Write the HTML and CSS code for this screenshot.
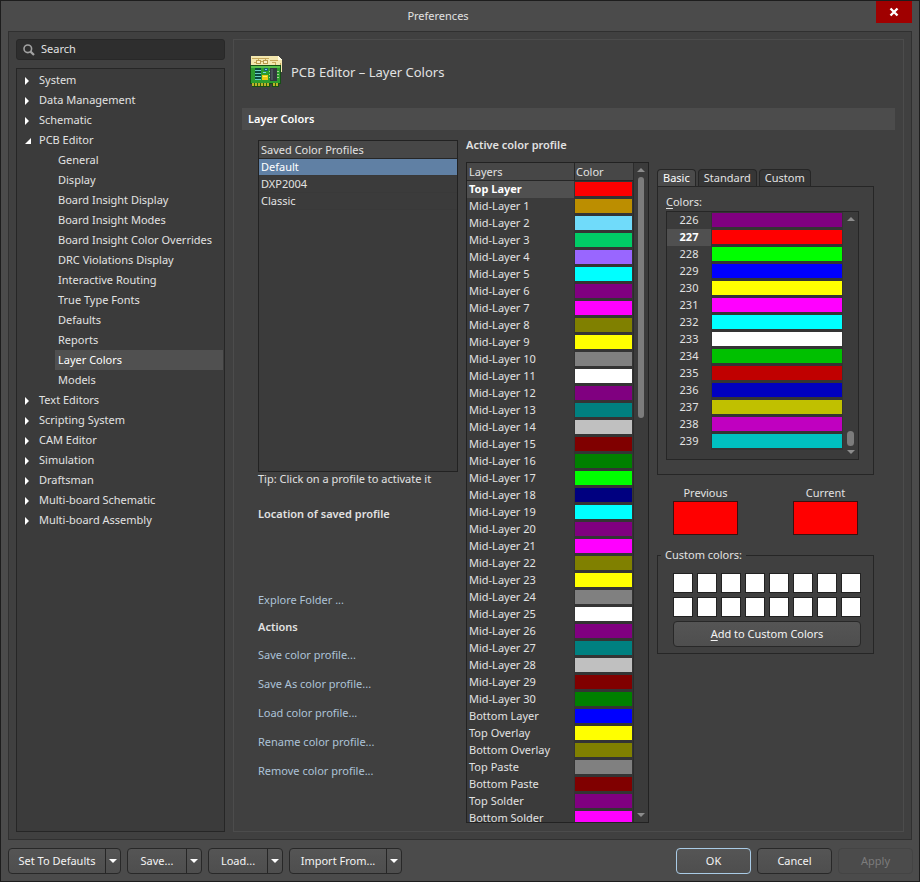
FILE: index.html
```html
<!DOCTYPE html>
<html lang="en">
<head>
<meta charset="utf-8">
<title>Preferences</title>
<link rel="stylesheet" href="styles.css">
</head>
<body>
<div class="window">
  <header class="titlebar">
    <h1>Preferences</h1>
    <button class="close" aria-label="Close"><svg width="10" height="10" viewBox="0 0 10 10"><path d="M1.5 1.5L8.5 8.5M8.5 1.5L1.5 8.5" stroke="#fff" stroke-width="2.4"/></svg></button>
  </header>

  <main class="body">
    <aside class="side">
      <label class="search">
        <svg width="12" height="12" viewBox="0 0 12 12" fill="none" stroke="#a2a2a2"><circle cx="4.8" cy="4.8" r="3.8" stroke-width="1.6"/><path d="M7.6 7.6L11 11" stroke-width="2.2"/></svg>
        <input type="text" placeholder="Search" aria-label="Search">
      </label>
      <nav class="tree">
        <ul>
          <li><a href="#" class="node">System</a></li>
          <li><a href="#" class="node">Data Management</a></li>
          <li><a href="#" class="node">Schematic</a></li>
          <li><a href="#" class="node open">PCB Editor</a>
            <ul class="sub">
              <li><a href="#">General</a></li>
              <li><a href="#">Display</a></li>
              <li><a href="#">Board Insight Display</a></li>
              <li><a href="#">Board Insight Modes</a></li>
              <li><a href="#">Board Insight Color Overrides</a></li>
              <li><a href="#">DRC Violations Display</a></li>
              <li><a href="#">Interactive Routing</a></li>
              <li><a href="#">True Type Fonts</a></li>
              <li><a href="#">Defaults</a></li>
              <li><a href="#">Reports</a></li>
              <li><a href="#" class="current">Layer Colors</a></li>
              <li><a href="#">Models</a></li>
            </ul>
          </li>
          <li><a href="#" class="node">Text Editors</a></li>
          <li><a href="#" class="node">Scripting System</a></li>
          <li><a href="#" class="node">CAM Editor</a></li>
          <li><a href="#" class="node">Simulation</a></li>
          <li><a href="#" class="node">Draftsman</a></li>
          <li><a href="#" class="node">Multi-board Schematic</a></li>
          <li><a href="#" class="node">Multi-board Assembly</a></li>
        </ul>
      </nav>
    </aside>

    <section class="page">
      <div class="heading">
        <svg width="33" height="33" viewBox="0 0 33 33" shape-rendering="crispEdges">
          <path d="M1 1H28L32 5V17H1Z" fill="#f3e7ae"/>
          <path d="M28 1V5H32Z" fill="#fffbe0"/>
          <path d="M2 3.5H19M20 5.5H28M11 6.5H13M22 7.5H25V10M8.5 3V5M15.5 3V5M4 7.5H6M30.5 8V16" stroke="#c7a95c" fill="none"/>
          <path d="M6.5 5.5H10.5V8.5H6.5ZM13.5 5.5H17.5V8.5H13.5Z" stroke="#b99a4e" fill="#f9f0c4"/>
          <path d="M0 10H31V29H29V32H22V29H20V32H2V29H0Z" fill="#164f16"/>
          <path d="M1 11H30V28H1Z" fill="#2c9c2e"/>
          <path d="M1 11H30V13H1Z" fill="#58bf4b"/>
          <path d="M2 28H19V31H2ZM23 28H28V31H23Z" fill="#b9b527"/>
          <path d="M4.5 28V31M7.5 28V31M10.5 28V31M13.5 28V31M16.5 28V31M25.5 28V31" stroke="#315c13"/>
          <path d="M5 14H11M5 17H11M5 20H11M5 23H11" stroke="#0b4a3e" stroke-width="2"/>
          <path d="M5 15.5H11M5 18.5H11M5 21.5H11M5 24.5H11" stroke="#69cfc0"/>
          <path d="M14 13H18V16H14Z" fill="#175e73"/>
          <path d="M15 14H17V15H15ZM13 17H16V18H13Z" fill="#72d8e3"/>
          <path d="M12 20H18V25H12Z" fill="#e9cc13"/>
          <path d="M13 21H17V22H13Z" fill="#fff05b"/>
          <path d="M20 13H27V26H20Z" fill="#343a40"/>
          <path d="M21 14H23V25H21Z" fill="#4b5359"/>
          <path d="M19 16.5H20M19 19.5H20M19 22.5H20M27 16.5H29M27 19.5H29M27 22.5H29" stroke="#a7d293"/>
        </svg>
        <h2>PCB Editor – Layer Colors</h2>
      </div>
      <h3 class="bar">Layer Colors</h3>

      <div class="columns">
        <div class="profiles">
          <div class="profile-list">
            <div class="list-head">Saved Color Profiles</div>
            <button class="profile selected">Default</button>
            <button class="profile">DXP2004</button>
            <button class="profile">Classic</button>
          </div>
          <p class="tip">Tip: Click on a profile to activate it</p>
          <h4 class="location">Location of saved profile</h4>
          <a href="#" class="explore">Explore Folder ...</a>
          <h4 class="actions-title">Actions</h4>
          <div class="actions">
            <a href="#">Save color profile...</a>
            <a href="#">Save As color profile...</a>
            <a href="#">Load color profile...</a>
            <a href="#">Rename color profile...</a>
            <a href="#">Remove color profile...</a>
          </div>
        </div>

        <div class="active">
          <h4>Active color profile</h4>
          <div class="layer-list">
            <div class="clip">
              <table class="layers">
                <thead><tr><th>Layers</th><th class="color-col">Color</th></tr></thead>
                <tbody>
                  <tr class="selected"><td>Top Layer</td><td class="sw red"></td></tr>
                  <tr><td>Mid-Layer 1</td><td class="sw ochre"></td></tr>
                  <tr><td>Mid-Layer 2</td><td class="sw sky"></td></tr>
                  <tr><td>Mid-Layer 3</td><td class="sw emerald"></td></tr>
                  <tr><td>Mid-Layer 4</td><td class="sw violet"></td></tr>
                  <tr><td>Mid-Layer 5</td><td class="sw cyan"></td></tr>
                  <tr><td>Mid-Layer 6</td><td class="sw purple"></td></tr>
                  <tr><td>Mid-Layer 7</td><td class="sw magenta"></td></tr>
                  <tr><td>Mid-Layer 8</td><td class="sw olive"></td></tr>
                  <tr><td>Mid-Layer 9</td><td class="sw yellow"></td></tr>
                  <tr><td>Mid-Layer 10</td><td class="sw gray"></td></tr>
                  <tr><td>Mid-Layer 11</td><td class="sw white"></td></tr>
                  <tr><td>Mid-Layer 12</td><td class="sw purple"></td></tr>
                  <tr><td>Mid-Layer 13</td><td class="sw teal"></td></tr>
                  <tr><td>Mid-Layer 14</td><td class="sw silver"></td></tr>
                  <tr><td>Mid-Layer 15</td><td class="sw maroon"></td></tr>
                  <tr><td>Mid-Layer 16</td><td class="sw green"></td></tr>
                  <tr><td>Mid-Layer 17</td><td class="sw lime"></td></tr>
                  <tr><td>Mid-Layer 18</td><td class="sw navy"></td></tr>
                  <tr><td>Mid-Layer 19</td><td class="sw cyan"></td></tr>
                  <tr><td>Mid-Layer 20</td><td class="sw purple"></td></tr>
                  <tr><td>Mid-Layer 21</td><td class="sw magenta"></td></tr>
                  <tr><td>Mid-Layer 22</td><td class="sw olive"></td></tr>
                  <tr><td>Mid-Layer 23</td><td class="sw yellow"></td></tr>
                  <tr><td>Mid-Layer 24</td><td class="sw gray"></td></tr>
                  <tr><td>Mid-Layer 25</td><td class="sw white"></td></tr>
                  <tr><td>Mid-Layer 26</td><td class="sw purple"></td></tr>
                  <tr><td>Mid-Layer 27</td><td class="sw teal"></td></tr>
                  <tr><td>Mid-Layer 28</td><td class="sw silver"></td></tr>
                  <tr><td>Mid-Layer 29</td><td class="sw maroon"></td></tr>
                  <tr><td>Mid-Layer 30</td><td class="sw green"></td></tr>
                  <tr><td>Bottom Layer</td><td class="sw blue"></td></tr>
                  <tr><td>Top Overlay</td><td class="sw yellow"></td></tr>
                  <tr><td>Bottom Overlay</td><td class="sw olive"></td></tr>
                  <tr><td>Top Paste</td><td class="sw gray"></td></tr>
                  <tr><td>Bottom Paste</td><td class="sw maroon"></td></tr>
                  <tr><td>Top Solder</td><td class="sw purple"></td></tr>
                  <tr><td>Bottom Solder</td><td class="sw magenta"></td></tr>
                </tbody>
              </table>
            </div>
            <div class="scroll layer-scroll"><i class="up"></i><i class="thumb"></i><i class="down"></i></div>
          </div>
        </div>

        <div class="picker">
          <div class="tabs" role="tablist">
            <button role="tab" aria-selected="true" class="on">Basic</button>
            <button role="tab">Standard</button>
            <button role="tab">Custom</button>
          </div>
          <div class="tabpanel" role="tabpanel">
            <p id="colors-label"><u>C</u>olors:</p>
            <div class="color-list">
              <table class="basic" aria-labelledby="colors-label">
                <tbody>
                  <tr><td>226</td><td class="sw purple"></td></tr>
                  <tr class="selected"><td>227</td><td class="sw red"></td></tr>
                  <tr><td>228</td><td class="sw lime"></td></tr>
                  <tr><td>229</td><td class="sw blue"></td></tr>
                  <tr><td>230</td><td class="sw yellow"></td></tr>
                  <tr><td>231</td><td class="sw magenta"></td></tr>
                  <tr><td>232</td><td class="sw cyan"></td></tr>
                  <tr><td>233</td><td class="sw white"></td></tr>
                  <tr><td>234</td><td class="sw green2"></td></tr>
                  <tr><td>235</td><td class="sw red2"></td></tr>
                  <tr><td>236</td><td class="sw blue2"></td></tr>
                  <tr><td>237</td><td class="sw yellow2"></td></tr>
                  <tr><td>238</td><td class="sw magenta2"></td></tr>
                  <tr><td>239</td><td class="sw cyan2"></td></tr>
                </tbody>
              </table>
              <div class="scroll color-scroll"><i class="up"></i><i class="thumb"></i><i class="down"></i></div>
            </div>
          </div>
          <div class="compare">
            <figure><figcaption>Previous</figcaption><div class="chip"></div></figure>
            <figure><figcaption>Current</figcaption><div class="chip"></div></figure>
          </div>
          <fieldset class="custom">
            <legend>Custom colors:</legend>
            <div class="slots">
              <button aria-label="Custom color 1"></button><button aria-label="Custom color 2"></button><button aria-label="Custom color 3"></button><button aria-label="Custom color 4"></button><button aria-label="Custom color 5"></button><button aria-label="Custom color 6"></button><button aria-label="Custom color 7"></button><button aria-label="Custom color 8"></button>
              <button aria-label="Custom color 9"></button><button aria-label="Custom color 10"></button><button aria-label="Custom color 11"></button><button aria-label="Custom color 12"></button><button aria-label="Custom color 13"></button><button aria-label="Custom color 14"></button><button aria-label="Custom color 15"></button><button aria-label="Custom color 16"></button>
            </div>
            <button class="btn add"><span><u>A</u>dd to Custom Colors</span></button>
          </fieldset>
        </div>
      </div>
    </section>
  </main>

  <footer class="footer">
    <div class="split wide"><button>Set To Defaults</button><button class="more" aria-label="Set To Defaults options"><i></i></button></div>
    <div class="split"><button>Save...</button><button class="more" aria-label="Save options"><i></i></button></div>
    <div class="split"><button>Load...</button><button class="more" aria-label="Load options"><i></i></button></div>
    <div class="split wide"><button>Import From...</button><button class="more" aria-label="Import options"><i></i></button></div>
    <div class="confirm">
      <button class="btn primary">OK</button>
      <button class="btn">Cancel</button>
      <button class="btn" disabled>Apply</button>
    </div>
  </footer>
</div>
</body>
</html>
```
FILE: styles.css
```css
* { box-sizing: border-box; }

body, h1, h2, h3, h4, p, ul, figure { margin: 0; padding: 0; }
ul { list-style: none; }

body {
  font: 11px/16px "Noto Sans", "Open Sans", sans-serif;
  color: #e2e2e2;
  background: #4b4b4b;
}

button, input {
  font: inherit;
  color: inherit;
  margin: 0;
  padding: 0;
}

a { color: inherit; text-decoration: none; }
h3, h4 { font-size: 11px; font-weight: 600; }
u { text-underline-offset: 2px; }

.window {
  display: flex;
  flex-direction: column;
  height: 100vh;
  border: 1px solid #1d1d1d;
  background: #4b4b4b;
}

/* Title bar */
.titlebar {
  position: relative;
  flex: 0 0 30px;
  text-align: center;
}
.titlebar h1 {
  font-size: 11px;
  font-weight: 400;
  line-height: 29px;
  padding-right: 44px;
}
.close {
  position: absolute;
  top: 0;
  right: 7px;
  width: 36px;
  height: 22px;
  border: 0;
  background: #a00000;
  display: grid;
  place-items: center;
}

/* Main frame */
.body {
  flex: 1;
  min-height: 0;
  display: flex;
  gap: 8px;
  margin: 0 7px;
  padding: 7px;
  border: 1px solid #303030;
  background: #404040;
}

/* Sidebar */
.side {
  flex: 0 0 209px;
  display: flex;
  flex-direction: column;
  gap: 8px;
}
.search {
  display: flex;
  align-items: center;
  gap: 6px;
  height: 21px;
  padding: 0 6px;
  border: 1px solid #282828;
  border-radius: 3px;
  background: #2e2e2e;
}
.search input {
  flex: 1;
  min-width: 0;
  padding-bottom: 2px;
  border: 0;
  background: none;
  outline: none;
}
.search input::placeholder { color: #e2e2e2; opacity: 1; }

.tree {
  flex: 1;
  padding: 1px;
  border: 1px solid #262626;
  background: #3b3b3b;
}
.tree a { display: block; line-height: 20px; }
.node { position: relative; padding-left: 21px; }
.node::before {
  content: "";
  position: absolute;
  left: 7px;
  top: 7px;
  border: solid transparent;
  border-width: 4px 0 4px 4px;
  border-left-color: #fff;
}
.node.open::before {
  top: 8px;
  border-width: 0 0 6px 6px;
  border-color: transparent;
  border-bottom-color: #fff;
}
.sub { padding-left: 37px; }
.sub a { padding-left: 3px; }
.sub .current { background: #505050; color: #fff; }

/* Page */
.page {
  flex: 1;
  min-width: 0;
  display: flex;
  flex-direction: column;
  padding: 15px 8px 8px;
  border: 1px solid #4c4c4c;
}
.heading {
  display: flex;
  align-items: center;
  gap: 8px;
  padding-left: 8px;
}
.heading h2 { font-size: 13px; font-weight: 400; }
.bar {
  margin-top: 20px;
  padding-left: 6px;
  line-height: 22px;
  background: #4c4c4c;
  color: #fff;
}
.columns {
  flex: 1;
  min-height: 0;
  display: grid;
  grid-template-columns: 200fr 183fr 217fr;
  gap: 8px;
  padding: 7px 21px 0 16px;
}

/* Saved profiles */
.profiles { padding-top: 3px; }
.profile-list {
  height: 332px;
  border: 1px solid #222;
  background: #3b3b3b;
}
.list-head {
  line-height: 17px;
  padding-left: 2px;
  background: #474747;
  border-bottom: 1px solid #262626;
}
.profile {
  display: block;
  width: 100%;
  height: 17px;
  padding-left: 2px;
  border: 0;
  background: none;
  text-align: left;
  line-height: 16px;
  border-bottom: 1px solid #393939;
}
.profile.selected { background: #6080a4; color: #fff; }
.tip { line-height: 14px; }
.location { margin-top: 20px; }
.explore { display: block; margin-top: 70px; color: #adc3d8; }
.actions-title { margin-top: 11px; }
.actions { padding-top: 5px; color: #adc3d8; }
.actions a { display: block; line-height: 29px; }

/* Layer table */
.active {
  display: flex;
  flex-direction: column;
  min-height: 0;
}
.active h4 { margin-bottom: 9px; }
.layer-list {
  flex: 1;
  min-height: 0;
  display: flex;
  border: 1px solid #222;
  background: #3b3b3b;
}
.clip { flex: 1; min-width: 0; overflow: hidden; }

table { border-collapse: separate; border-spacing: 0; table-layout: fixed; width: 100%; }
td, th { height: 17px; padding: 0; line-height: 16px; vertical-align: top; }

.layers { border-right: 1px solid #2c2c2c; }
.layers th {
  height: 18px;
  padding: 1px 0 0 2px;
  font-weight: 400;
  text-align: left;
  background: #474747;
  border-bottom: 1px solid #262626;
}
.layers .color-col {
  width: 59px;
  padding-left: 1px;
  border-left: 1px solid #262626;
}
.layers td:first-child { padding-left: 2px; }
.selected td:first-child { font-weight: 700; color: #fff; background: #505050; }

/* A swatch fills its cell inside a thin frame of list background */
.sw {
  background-clip: padding-box;
  border: solid #343434;
  border-width: 1px 1px 2px 1px;
}

.red { background-color: #ff0000; }
.ochre { background-color: #bc8e00; }
.sky { background-color: #70dbfa; }
.emerald { background-color: #00cc66; }
.violet { background-color: #9966ff; }
.cyan { background-color: #00ffff; }
.purple { background-color: #800080; }
.magenta { background-color: #ff00ff; }
.olive { background-color: #808000; }
.yellow { background-color: #ffff00; }
.gray { background-color: #808080; }
.white { background-color: #ffffff; }
.teal { background-color: #008080; }
.silver { background-color: #c0c0c0; }
.maroon { background-color: #800000; }
.green { background-color: #008000; }
.lime { background-color: #00ff00; }
.navy { background-color: #000080; }
.blue { background-color: #0000ff; }
.green2 { background-color: #00c000; }
.red2 { background-color: #c00000; }
.blue2 { background-color: #0000c0; }
.yellow2 { background-color: #c0c000; }
.magenta2 { background-color: #c000c0; }
.cyan2 { background-color: #00c0c0; }

/* Scroll bars */
.scroll {
  flex: 0 0 14px;
  display: flex;
  flex-direction: column;
  align-items: center;
  padding: 5px 0;
}
.scroll .up, .scroll .down { border: solid transparent; border-width: 0 4px 4px; border-bottom-color: #8c8c8c; }
.scroll .down { border-width: 4px 4px 0; border-top-color: #8c8c8c; }
.thumb { width: 6px; border-radius: 4px; background: #7c7c7c; }
.layer-scroll .thumb { height: 241px; margin: 5px 0 auto; }
.color-scroll .thumb { width: 7px; height: 15px; margin: auto 0 4px; }

/* Colour picker */
.picker { padding-top: 32px; min-width: 0; }
.tabs { display: flex; gap: 2px; }
.tabs button {
  height: 17px;
  padding: 0 5px;
  border: 1px solid #262626;
  border-bottom: 0;
  border-radius: 4px 4px 0 0;
  background: #363636;
  line-height: 14px;
}
.tabs .on { background: #4b4b4b; color: #fff; }
.tabpanel {
  height: 289px;
  padding: 7px 14px 14px 8px;
  border: 1px solid #262626;
}
.color-list {
  display: flex;
  align-items: stretch;
  height: 249px;
  margin-top: 1px;
  border: 1px solid #262626;
  background: #3b3b3b;
}
.basic { flex: 1; align-self: flex-start; }
.basic td:first-child { width: 44px; text-align: center; }
.color-scroll { flex-basis: 15px; }

.compare {
  display: flex;
  justify-content: space-between;
  padding: 10px 16px 0;
  text-align: center;
}
.chip { width: 65px; height: 34px; border: 1px solid #3a1010; background: #ff0000; }

.custom {
  min-width: 0;
  margin: 12px 0 0;
  padding: 10px 12px 6px 15px;
  border: 1px solid #262626;
}
.custom legend { margin-left: -12px; padding: 0 4px; }
.slots {
  display: grid;
  grid-template-columns: repeat(8, 20px);
  justify-content: space-between;
  row-gap: 4px;
}
.slots button { height: 20px; border: 1px solid #222; background: #fff; }

/* Buttons */
.btn, .split {
  height: 26px;
  border: 1px solid #282828;
  border-radius: 4px;
  background: linear-gradient(#555, #4e4e4e);
  color: #f4f4f4;
}
.add { width: 100%; margin-top: 4px; }

.footer {
  flex: 0 0 41px;
  display: flex;
  align-items: center;
  gap: 6px;
  padding: 0 6px 0 7px;
}
.split { display: flex; width: 75px; }
.split.wide { width: 113px; }
.split button { flex: 1; border: 0; background: none; }
.split .more {
  flex: 0 0 15px;
  border-left: 1px solid #262626;
  display: grid;
  place-items: center;
}
.more i { border: 4px solid transparent; border-bottom: 0; border-top-color: #fff; }
.confirm { display: flex; gap: 6px; margin-left: auto; }
.confirm .btn { width: 75px; }
.confirm .primary { border-color: #a9cbe6; }
.confirm .btn:disabled { border-color: #444; background: #4b4b4b; color: #7c7c7c; }
```
